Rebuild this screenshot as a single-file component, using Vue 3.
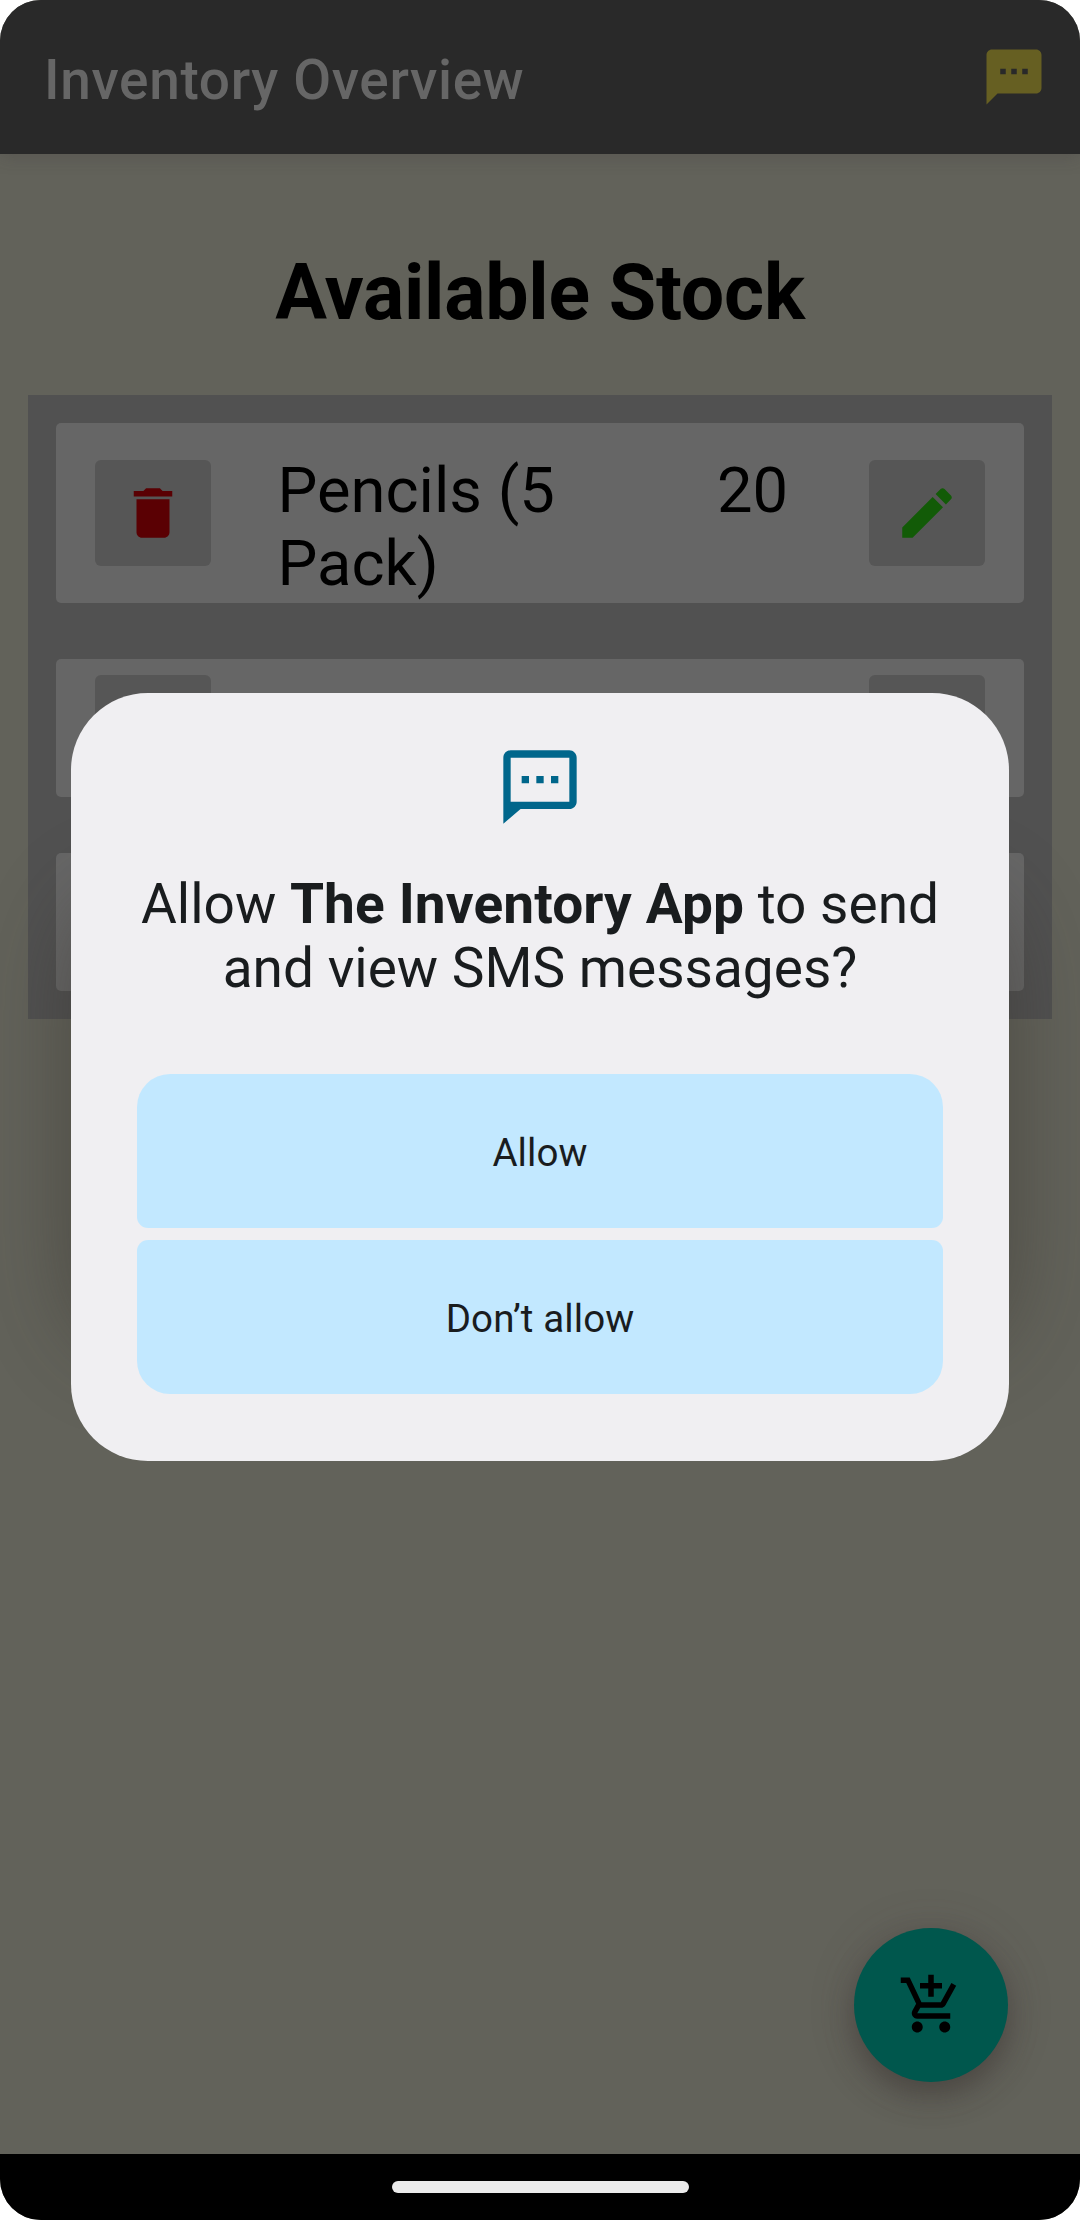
<script setup>
const items = [
  { id: 1, name: 'Pencils (5 Pack)', quantity: 20 },
  { id: 2, name: '', quantity: '' },
  { id: 3, name: '', quantity: '' },
]
</script>

<template>
  <div class="screen">
    <header class="app-bar">
      <h1 class="app-title">Inventory Overview</h1>
      <svg class="icon sms" viewBox="0 0 24 24">
        <path d="M20 2H4c-1.100 0-2 .9-2 2v18l4-4h14c1.100 0 2-.9 2-2V4c0-1.100-.9-2-2-2zM9 11H7V9h2v2zm4 0h-2V9h2v2zm4 0h-2V9h2v2z" />
      </svg>
    </header>

    <main class="content">
      <h2 class="heading">Available Stock</h2>
      <section class="list">
        <article v-for="item in items" :key="item.id" class="card" :class="{ tall: item.name }">
          <div class="action">
            <svg class="icon delete" viewBox="0 0 24 24">
              <path d="M6 19c0 1.100.9 2 2 2h8c1.100 0 2-.9 2-2V7H6v12zM19 4h-3.500l-1-1h-5l-1 1H5v2h14V4z" />
            </svg>
          </div>
          <div class="name">{{ item.name }}</div>
          <div class="quantity">{{ item.quantity }}</div>
          <div class="action">
            <svg class="icon edit" viewBox="0 0 24 24">
              <path d="M3 17.250V21h3.750L17.810 9.940l-3.750-3.750L3 17.250zM20.710 7.040c.39-.39.39-1.020 0-1.410l-2.340-2.340c-.39-.39-1.020-.39-1.410 0l-1.830 1.830 3.750 3.750 1.830-1.830z" />
            </svg>
          </div>
        </article>
      </section>
      <div class="fab">
        <svg class="icon" viewBox="0 0 24 24">
          <path d="M11 9h2V6h3V4h-3V1h-2v3H8v2h3v3zM7 18c-1.100 0-1.990.9-1.990 2S5.900 22 7 22s2-.9 2-2-.9-2-2-2zM17 18c-1.100 0-1.990.9-1.990 2s.89 2 1.990 2 2-.9 2-2-.9-2-2-2zM8.100 13h7.450c.75 0 1.410-.41 1.750-1.030l3.860-7.010L19.420 4l-3.870 7H8.530L4.270 2H1v2h2l3.600 7.590-1.350 2.440C4.520 15.370 5.480 17 7 17h12v-2H7l1.100-2z" />
        </svg>
      </div>
    </main>

    <footer class="nav-bar"><div class="handle"></div></footer>

    <div class="dialog-layer">
      <div class="dialog" role="dialog">
        <svg class="dialog-icon" viewBox="0 0 24 24">
          <path fill-rule="evenodd" d="M4 2C2.900 2 2 2.900 2 4v18l4.700-4H20c1.100 0 2-.9 2-2V4c0-1.100-.9-2-2-2H4zM4 4h16v12H4zM7 9h2v2H7zM11 9h2v2h-2zM15 9h2v2h-2z" />
        </svg>
        <p class="message">Allow <b>The Inventory App</b> to send<br />and view SMS messages?</p>
        <div class="choices">
          <div class="choice first">Allow</div>
          <div class="choice last">Don’t allow</div>
        </div>
      </div>
    </div>
  </div>
</template>

<style>
body {
  margin: 0;
  background: #fff;
}
</style>

<style scoped>
.screen {
  position: relative;
  display: flex;
  flex-direction: column;
  width: 1080px;
  height: 2220px;
  overflow: hidden;
  border-radius: 41px;
  background: #62625a;
  font-family: Roboto, sans-serif;
  color: #000;
}
.icon {
  display: block;
  width: 66px;
  height: 66px;
  fill: currentColor;
}
.app-bar {
  display: flex;
  align-items: center;
  justify-content: space-between;
  box-sizing: border-box;
  height: 154px;
  padding: 0 33px 0 44px;
  background: #292929;
  box-shadow: 0 3px 16px rgba(60, 50, 55, 0.25);
}
.app-title {
  margin: 5px 0 0;
  font-size: 55px;
  font-weight: 500;
  line-height: 64px;
  letter-spacing: 0.66px;
  color: #666;
}
.sms {
  color: #665f22;
}
.content {
  position: relative;
  flex: 1;
}
.heading {
  margin: 0;
  padding-top: 94px;
  height: 147px;
  font-size: 77px;
  font-weight: 700;
  line-height: 90px;
  letter-spacing: -0.22px;
  text-align: center;
}
.list {
  display: flex;
  flex-direction: column;
  gap: 56px;
  margin: 0 28px;
  padding: 28px;
  background: #515151;
}
.card {
  display: flex;
  align-items: center;
  box-sizing: border-box;
  height: 138px;
  padding: 0 39px;
  border-radius: 5px;
  background: #666;
}
.card.tall {
  height: 180px;
}
.action {
  display: flex;
  flex: none;
  align-items: center;
  justify-content: center;
  width: 116px;
  height: 106px;
  border-radius: 6px;
  background: #565656;
}
.delete {
  color: #5a0003;
}
.edit {
  color: #125b07;
}
.name,
.quantity {
  align-self: flex-start;
  padding-top: 31px;
  font-size: 63.25px;
  line-height: 73px;
}
.name {
  width: 330px;
  margin-left: 66.500px;
}
.quantity {
  flex: 1;
  margin-left: 109.500px;
}
.fab {
  position: absolute;
  right: 72px;
  bottom: 72px;
  display: flex;
  align-items: center;
  justify-content: center;
  width: 154px;
  height: 154px;
  border-radius: 50%;
  background: #00574d;
  box-shadow: 0 14px 28px rgba(50, 45, 40, 0.42), 0 4px 44px rgba(80, 65, 70, 0.25);
}
.nav-bar {
  display: flex;
  justify-content: center;
  box-sizing: border-box;
  height: 66px;
  padding-top: 27px;
  background: #000;
}
.handle {
  width: 297px;
  height: 12px;
  border-radius: 6px;
  background: #ebebeb;
}
.dialog-layer {
  position: absolute;
  top: 693px;
  left: 71px;
  width: 938px;
}
.dialog-layer::before {
  content: '';
  position: absolute;
  inset: 200px 0 110px;
  border-radius: 77px;
  box-shadow: 0 0 86px rgba(50, 45, 40, 0.46);
}
.dialog {
  position: relative;
  display: flex;
  flex-direction: column;
  align-items: center;
  box-sizing: border-box;
  height: 768px;
  padding: 50px 66px 0;
  border-radius: 77px;
  background: #f0eff2;
  color: #191c1e;
}
.dialog-icon {
  display: block;
  width: 88px;
  height: 88px;
  fill: #00668b;
}
.message {
  margin: 41px 0 0;
  font-size: 55px;
  line-height: 64px;
  text-align: center;
  white-space: nowrap;
}
.message b {
  letter-spacing: 0.12px;
}
.choices {
  display: flex;
  flex-direction: column;
  gap: 12px;
  width: 100%;
  margin-top: 74px;
}
.choice {
  height: 154px;
  border-radius: 11px;
  background: #c2e8ff;
  font-size: 38.500px;
  line-height: 157px;
  letter-spacing: 0.1px;
  text-align: center;
}
.first {
  border-top-left-radius: 33px;
  border-top-right-radius: 33px;
}
.last {
  border-bottom-left-radius: 33px;
  border-bottom-right-radius: 33px;
}
</style>
